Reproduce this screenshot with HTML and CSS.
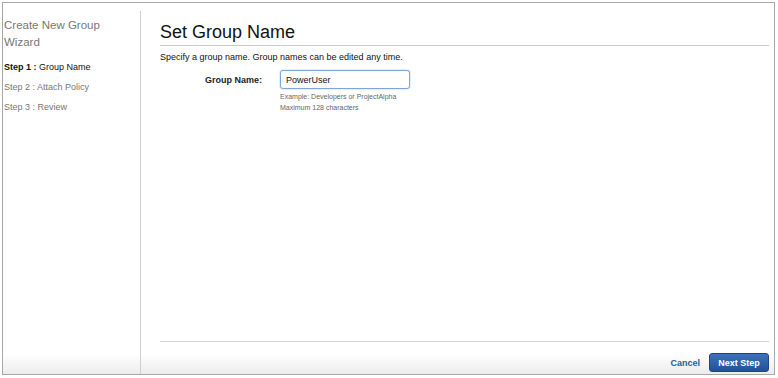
FILE: index.html
```html
<!DOCTYPE html>
<html>
<head>
  <title>Create New Group Wizard</title>
  <link rel="stylesheet" href="styles.css">
</head>
<body>
  <div class="wizard">
    <div class="sidebar">
      <div class="wizard-title">Create New Group Wizard</div>
      <ul class="steps">
        <li class="step active"><b>Step 1 :</b> Group Name</li>
        <li class="step">Step 2 : Attach Policy</li>
        <li class="step">Step 3 : Review</li>
      </ul>
    </div>
    <div class="main">
      <h1 class="heading">Set Group Name</h1>
      <p class="intro">Specify a group name. Group names can be edited any time.</p>
      <div class="form-row">
        <label class="label" for="group-name">Group Name:</label>
        <input type="text" id="group-name" class="text-input" value="PowerUser" />
      </div>
      <div class="hints">
        <div>Example: Developers or ProjectAlpha</div>
        <div>Maximum 128 characters</div>
      </div>
      <div class="footer">
        <a class="cancel">Cancel</a>
        <button class="next">Next Step</button>
      </div>
    </div>
  </div>
</body>
</html>
```

FILE: styles.css
```css
body {
  margin: 0;
  font-family: "Liberation Sans", Arial, sans-serif;
  color: #222;
}
.wizard {
  display: flex;
  width: 771px;
  height: 371px;
  margin: 2px;
  border: 1px solid #a8a8a8;
  background: linear-gradient(to bottom, #fff calc(100% - 20px), #ececec);
}
.sidebar {
  width: 138px;
  margin-top: 8px;
  padding: 6px 0 0 1px;
  border-right: 1px solid #cfcfcf;
  box-sizing: border-box;
}
.wizard-title {
  width: 112px;
  font-size: 11.5px;
  line-height: 17px;
  color: #777;
}
.steps {
  list-style: none;
  margin: 6px 0 0 0;
  padding: 0;
}
.step {
  font-size: 9px;
  line-height: 20px;
  color: #777;
}
.step.active {
  color: #111;
}
.main {
  flex: 1;
  display: flex;
  flex-direction: column;
  padding: 0 5px 0 19px;
}
.heading {
  margin: 18px 0 0 0;
  padding-bottom: 2px;
  font-size: 18px;
  line-height: 22px;
  font-weight: normal;
  color: #111;
  border-bottom: 1px solid #cacaca;
}
.intro {
  margin: 5px 0 0 0;
  font-size: 9px;
  line-height: 12px;
  color: #111;
}
.form-row {
  display: flex;
  align-items: center;
  margin-top: 7px;
}
.label {
  width: 102px;
  text-align: right;
  font-size: 9px;
  font-weight: bold;
  color: #222;
}
.text-input {
  margin-left: 18px;
  width: 130px;
  height: 19px;
  box-sizing: border-box;
  padding: 0 5px;
  border: 1px solid #7ea6d6;
  border-radius: 3px;
  box-shadow: 0 0 2px #9fc0e8;
  font-family: "Liberation Sans", Arial, sans-serif;
  font-size: 9px;
  color: #111;
}
.hints {
  margin: 2px 0 0 120px;
  font-size: 7px;
  line-height: 11px;
  color: #666;
}
.footer {
  margin-top: auto;
  display: flex;
  justify-content: flex-end;
  align-items: center;
  gap: 9px;
  padding: 11px 0 2px 0;
  border-top: 1px solid #d4d4d4;
}
.cancel {
  font-size: 9px;
  font-weight: bold;
  color: #2b5a9e;
  cursor: pointer;
}
.next {
  width: 60px;
  height: 19px;
  padding: 0;
  border: 1px solid #1d4583;
  border-radius: 3px;
  background: linear-gradient(to bottom, #3f71b8, #22519a);
  color: #fff;
  font-family: "Liberation Sans", Arial, sans-serif;
  font-size: 9px;
  font-weight: bold;
  cursor: pointer;
}
```
